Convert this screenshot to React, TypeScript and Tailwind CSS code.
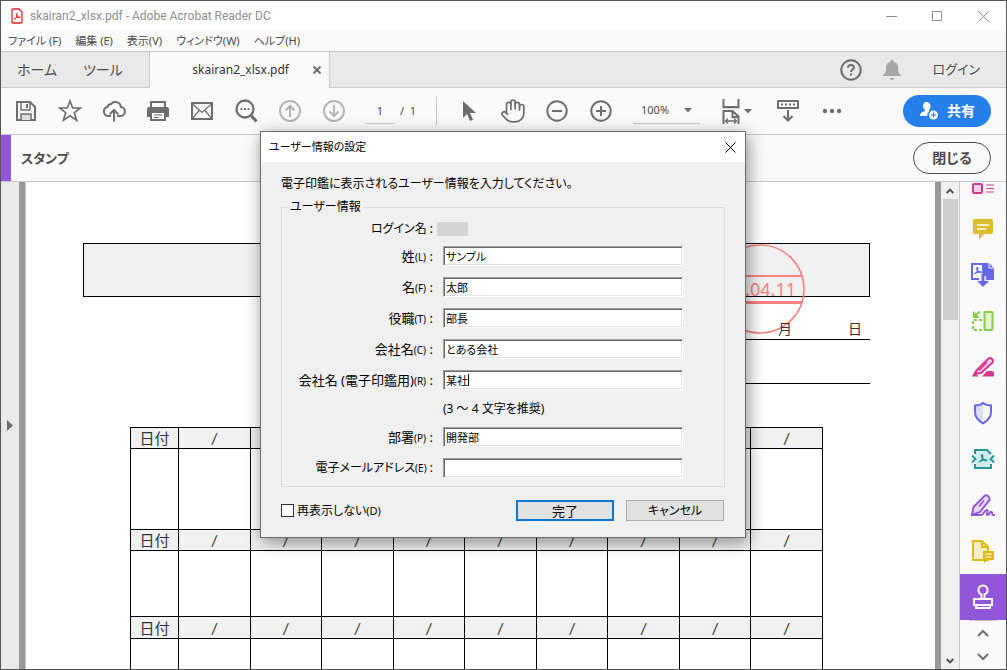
import React from 'react';
import { Hand } from 'lucide-react';

interface IconProps {
  w: number;
  h: number;
  className?: string;
  children: React.ReactNode;
}

const Icon: React.FC<IconProps> = ({ w, h, className, children }) => (
  <svg
    width={w}
    height={h}
    viewBox={`0 0 ${w} ${h}`}
    fill="none"
    stroke="currentColor"
    strokeWidth="2"
    className={`shrink-0 ${className || ''}`}
    aria-hidden="true"
  >
    {children}
  </svg>
);

// Main toolbar icons
const SaveIcon = () => (
  <Icon w={20} h={20}>
    <path d="M1 1h13l5 5v13H1z" />
    <path d="M5 1v8h9V1" strokeWidth="1.5" />
    <path d="M11 3v4" />
    <path d="M5 19v-6h10v6" fill="#dcdcdc" strokeWidth="1.5" />
  </Icon>
);

const StarIcon = () => (
  <Icon w={24} h={24}>
    <path d="M12 2l2.700 7h7.600l-6 4.700 2.300 7.600-6.600-4.500-6.600 4.500 2.300-7.600-6-4.700h7.600z" strokeWidth="1.700" />
  </Icon>
);

const CloudIcon = () => (
  <Icon w={24} h={24}>
    <path d="M9 17H6.500a4.500 4.500 0 0 1-1-8.900 3 3 0 0 1 3.300-2.800 5.500 5.500 0 0 1 10 2.700 4.500 4.500 0 0 1-.8 9H15" />
    <path d="M12 22.500V11.500M7.800 15.200L12 11l4.200 4.200" />
  </Icon>
);

const PrinterIcon = () => (
  <Icon w={22} h={22}>
    <path d="M4 7V2h14v5" />
    <path d="M0 9q0-2 2-2h18q2 0 2 2v8h-4v-4H4v4H0z" fill="currentColor" stroke="none" />
    <path d="M4 12h14v8H4z" fill="#fafafa" />
    <path d="M7 15h8M7 17.500h5" strokeWidth="1" />
  </Icon>
);

const MailIcon = () => (
  <Icon w={22} h={18}>
    <rect x="1" y="1" width="20" height="16" />
    <path d="M1 1.500l10 9 10-9M1.500 16.500l6.500-8M20.500 16.500l-6.500-8" strokeWidth="1.200" />
  </Icon>
);

const SearchIcon = () => (
  <Icon w={24} h={24}>
    <circle cx="11" cy="10" r="8.500" strokeWidth="2.300" />
    <path d="M17 16.500l5.500 6" strokeWidth="3" />
    <path d="M6.500 10h2M10 10h2M13.500 10h2" />
  </Icon>
);

const ArrowCircleIcon: React.FC<{ down?: boolean }> = ({ down }) => (
  <Icon w={22} h={22} className="text-[#b4b4b4]">
    <circle cx="11" cy="11" r="10" />
    <path d={down ? 'M11 5v11M6.500 11.500L11 16l4.500-4.500' : 'M11 17V6M6.500 10.500L11 6l4.500 4.500'} />
  </Icon>
);

const ZoomCircleIcon: React.FC<{ plus?: boolean }> = ({ plus }) => (
  <Icon w={22} h={22}>
    <circle cx="11" cy="11" r="9.700" />
    <path d={plus ? 'M6 11h10M11 6v10' : 'M6 11h10'} />
  </Icon>
);

const CursorIcon = () => (
  <Icon w={14} h={22}>
    <path d="M1 1v17l4-4 3 7 3-1.300L8 13h6z" fill="currentColor" stroke="none" />
  </Icon>
);

const FitIcon = () => (
  <Icon w={18} h={25}>
    <path d="M1.500 0v8h15V0" />
    <path d="M0 9.500h18" stroke="#d5d5d5" strokeWidth="1" />
    <path d="M1.500 25V12h9l6 5.500V25M10.500 12v6h6" />
    <path d="M3.500 22h11M6 19.500L3.500 22 6 24.500M12 19.500l2.500 2.500-2.500 2.500" strokeWidth="1.300" />
  </Icon>
);

const KeyboardIcon = () => (
  <Icon w={22} h={22}>
    <rect x="1" y="1" width="20" height="7" />
    <path d="M4 4.500h14" strokeDasharray="2 2" />
    <path d="M11 10v10M6.500 16L11 20.500l4.500-4.500" />
  </Icon>
);

const DotsIcon = () => (
  <Icon w={20} h={6}>
    <g fill="currentColor" stroke="none">
      <circle cx="3" cy="3" r="2.200" />
      <circle cx="10" cy="3" r="2.200" />
      <circle cx="17" cy="3" r="2.200" />
    </g>
  </Icon>
);

const ShareIcon = () => (
  <Icon w={20} h={18}>
    <g fill="currentColor" stroke="none">
      <path d="M7.500 0c2.600 0 4 1.800 4 4.300 0 1.700-.7 3-1.500 4v1.500c-1.500 1-2 2.700-1.600 4.200H1c0-3 1.800-4 5-5V8C5 7 4 5.800 4 4.300 4 1.800 5.200 0 7.500 0z" />
      <circle cx="14.500" cy="13" r="4.500" />
    </g>
    <path d="M12 13h5M14.500 10.500v5" stroke="#2680eb" strokeWidth="1.200" />
  </Icon>
);

const AcrobatMark = () => (
  <path d="M5 12.500c3-1 5-4.500 4.500-8 0-1-1.300-1-1.300 0 .3 3 2.500 5.500 5.300 6.200 1 .2 1-1 0-1-3.500-.3-6 .8-8.500 2.800" />
);

// Right-hand tool icons
const ExportListIcon = () => (
  <Icon w={24} h={12} className="text-[#d83790]">
    <rect x="2" y="1" width="9" height="9" rx="1" fill="#f7d3e5" />
    <path d="M15 2h8M15 5.500h8M15 9h8" strokeWidth="1.200" />
  </Icon>
);

const CommentIcon = () => (
  <Icon w={22} h={22} className="text-[#dfbd2b]">
    <path d="M2.500 1h17q1.500 0 1.500 1.500v12q0 1.500-1.500 1.500H12l-5 6v-6H2.500Q1 16 1 14.500v-12Q1 1 2.500 1z" fill="currentColor" stroke="none" />
    <path d="M5 7h12M5 11h9" stroke="#fff" strokeWidth="1.500" />
  </Icon>
);

const CreatePdfIcon = () => (
  <Icon w={26} h={26} className="text-[#6767ec]">
    <path d="M12.500 1H19l5 5v12h-8v-4h-3.500z" fill="currentColor" stroke="none" />
    <path d="M19 0v6h6" stroke="#fafafa" strokeWidth="1" />
    <path d="M9 17H2V2h11v9" />
    <g transform="translate(1 3) scale(.7)"><AcrobatMark /></g>
    <path d="M13 25l-6-6h12z" fill="currentColor" stroke="none" />
    <path d="M13 12v8" strokeWidth="3" />
  </Icon>
);

const OrganizeIcon = () => (
  <Icon w={24} h={22} className="text-[#84cf4a]">
    <rect x="13.500" y="2" width="8" height="18" rx="1" fill="#e2f4d3" />
    <path d="M11 10H2v10h9" strokeDasharray="3 2" />
    <path d="M2 1v7h7z" fill="currentColor" stroke="none" />
    <path d="M9 1.500L5 5" />
  </Icon>
);

const RedactIcon = () => (
  <Icon w={24} h={22} className="text-[#d83790]">
    <path d="M5 15l12-12q2-2 4 0t0 4L10 17l-5 .5z" fill="#f7d3e5" />
    <path d="M1 20.500l2.500-5 4 5zM11 20.500l5-5.500h5q2 0 2 2v3.500z" fill="currentColor" stroke="none" />
    <path d="M8 14.500l8-8" strokeWidth="1.500" />
  </Icon>
);

const ShieldIcon = () => (
  <Icon w={20} h={24} className="text-[#6767ec]">
    <path d="M10 2v20c-5-3-8-6-8-11V4.500C5 4.500 8 3.500 10 2z" fill="#dcdcfa" stroke="none" />
    <path d="M10 2c2 1.700 5 2.500 8 2.500V11c0 5-3 8.500-8 11.300C5 19.500 2 16 2 11V4.500C5 4.500 8 3.700 10 2z" />
  </Icon>
);

const CompressIcon = () => (
  <Icon w={24} h={22} className="text-[#1f9a9a]">
    <path d="M4 2h12l4 4v14H4z" fill="#d5ecec" stroke="none" />
    <path d="M4 6V2h12l4 4M4 16v4h16v-4" />
    <path d="M0 6h2l4 5-4 5H0zM24 6h-2l-4 5 4 5h2z" fill="#fafafa" stroke="none" />
    <path d="M1 7.500L4.500 11 1 14.500M23 7.500L19.500 11l3.500 3.500" />
    <g transform="translate(4 4) scale(.8)"><AcrobatMark /></g>
  </Icon>
);

const SignIcon = () => (
  <Icon w={26} h={24} className="text-[#9256d9]">
    <path d="M2 22l1.500-8L14.500 3q1.500-1.500 3.500 0t1.500 4L10 19z" fill="#e6d8f6" />
    <path d="M9 13.500l5-6" strokeWidth="1.500" />
    <path d="M2 22h9c3 0 4-6 6-5s-1.500 5 .5 5 2.500-4 4-3 0 3 1.500 3h2" />
  </Icon>
);

const PageCommentIcon = () => (
  <Icon w={24} h={24} className="text-[#dcbc0c]">
    <path d="M2 2h9l6 6v13H2z" fill="#f6eec6" />
    <path d="M11 2v6h6" />
    <path d="M12 12h11v9h-6l-4 3v-3h-1z" fill="currentColor" stroke="none" />
    <path d="M14.500 15.200h6M14.500 18h6" stroke="#fff" strokeWidth="1.200" />
  </Icon>
);

const StampIcon = () => (
  <Icon w={22} h={26} className="text-white">
    <path d="M9.500 15v-4.500a4.600 4.600 0 1 1 3 0V15" />
    <path d="M2 15h18v6H2zM4 21v3h14v-3" />
  </Icon>
);

const CloseX: React.FC<{ size: number; stroke?: string }> = ({ size, stroke = '1' }) => (
  <Icon w={size} h={size}>
    <path d={`M.5 .5L${size - 0.5} ${size - 0.5}M${size - 0.5} .5L.5 ${size - 0.5}`} strokeWidth={stroke} />
  </Icon>
);

const Triangle = () => (
  <Icon w={8} h={5} className="pointer-events-none">
    <path d="M0 0h8L4 4.500z" fill="currentColor" stroke="none" />
  </Icon>
);

const Chevron: React.FC<{ up?: boolean; small?: boolean }> = ({ up, small }) => (
  <svg
    width={small ? 8 : 12}
    height={small ? 6 : 8}
    viewBox="0 0 12 8"
    fill="none"
    stroke="currentColor"
    strokeWidth={small ? 3 : 2}
    aria-hidden="true"
  >
    <path d={up ? 'M1 7l5-5 5 5' : 'M1 1l5 5 5-5'} />
  </svg>
);

interface ToolButtonProps {
  label: string;
  className?: string;
  children: React.ReactNode;
}

const ToolButton: React.FC<ToolButtonProps> = ({ label, className, children }) => (
  <button aria-label={label} className={`flex h-full w-11 shrink-0 items-center justify-center ${className || ''}`}>
    {children}
  </button>
);

const menus = ['ファイル (F)', '編集 (E)', '表示(V)', 'ウィンドウ(W)', 'ヘルプ(H)'];

const TitleBar = () => (
  <header className="flex h-[30px] shrink-0 items-center bg-white pl-[10px] text-[#8e8e8e]">
    <Icon w={12} h={16} className="text-[#e5252a]">
      <path d="M2 1h6l3 3v10q0 1-1 1H2q-1 0-1-1V2q0-1 1-1z" strokeWidth="1.300" />
      <path d="M3 11.500c2-1 3.500-3 3-5.500 0-.6-.8-.6-.8 0 .3 2 1.500 3.500 3.500 3.800.8 0 .8-.8 0-.8-2 0-4 .8-5.700 2.500z" strokeWidth="1" />
    </Icon>
    <h1 className="ml-[7px] font-['Roboto',sans-serif] text-xs">skairan2_xlsx.pdf - Adobe Acrobat Reader DC</h1>
    <div className="ml-auto flex h-full items-center">
      <button aria-label="最小化" className="flex h-full w-[45px] items-center justify-center">
        <span className="h-px w-[11px] bg-[#8e8e8e]" />
      </button>
      <button aria-label="最大化" className="flex h-full w-[46px] items-center justify-center">
        <span className="size-[10px] border border-[#8e8e8e]" />
      </button>
      <button aria-label="閉じる" className="flex h-full w-[46px] items-center justify-center">
        <CloseX size={11} />
      </button>
    </div>
  </header>
);

const TabRow = () => (
  <div className="flex h-[37px] shrink-0 border-t border-[#c8c8c8] bg-[#e9e9e9] text-[#4b4b4b]">
    <nav className="flex w-[148px] shrink-0 items-center gap-[26px] border-b border-[#c8c8c8] pl-4 text-sm">
      <button>ホーム</button>
      <button>ツール</button>
    </nav>
    <div className="flex w-[181px] shrink-0 items-center justify-end border-x border-[#c8c8c8] bg-[#fafafa] pr-2 text-xs text-[#323232]">
      <span>skairan2_xlsx.pdf</span>
      <button aria-label="タブを閉じる" className="ml-6 text-[#6e6e6e]">
        <CloseX size={8} stroke="2" />
      </button>
    </div>
    <div className="flex flex-1 items-center justify-end border-b border-[#c8c8c8] pr-[26px]">
      <button aria-label="ヘルプ" className="text-[#6e6e6e]">
        <Icon w={22} h={22}>
          <circle cx="11" cy="11" r="9.700" />
          <path d="M8 8.700Q8 6 11 6t3 2.500c0 2-3 2-3 4.500M11 14.500v2" />
        </Icon>
      </button>
      <button aria-label="通知" className="ml-[21px] text-[#a6a6a6]">
        <Icon w={18} h={20}>
          <path d="M9 0c1.300 0 1.500.8 1.500 1.700C14 2.500 15 5 15 8c0 4 .5 5.500 3 7v1H0v-1c2.500-1.500 3-3 3-7 0-3 1-5.500 4.500-6.300C7.500.8 7.700 0 9 0zM6.500 18h5q-1 2-2.500 2t-2.500-2z" fill="currentColor" stroke="none" />
        </Icon>
      </button>
      <button className="ml-8 text-[13px]">ログイン</button>
    </div>
  </div>
);

const Toolbar = () => (
  <div className="flex h-[46px] shrink-0 items-center bg-[#fafafa] pl-[3px] pr-[15px] text-[#6e6e6e]">
    <ToolButton label="保存"><SaveIcon /></ToolButton>
    <ToolButton label="お気に入り"><StarIcon /></ToolButton>
    <ToolButton label="アップロード"><CloudIcon /></ToolButton>
    <ToolButton label="印刷"><PrinterIcon /></ToolButton>
    <ToolButton label="メール"><MailIcon /></ToolButton>
    <ToolButton label="検索"><SearchIcon /></ToolButton>
    <ToolButton label="前のページ"><ArrowCircleIcon /></ToolButton>
    <ToolButton label="次のページ"><ArrowCircleIcon down /></ToolButton>
    <input
      aria-label="ページ番号"
      defaultValue="1"
      className="ml-[10px] h-[26px] w-7 shrink-0 border-b border-[#c8c8c8] text-center text-[11px] text-[#4b4b4b]"
    />
    <span className="ml-[6px] w-9 shrink-0 whitespace-pre text-[11px] text-[#4b4b4b]">/  1</span>
    <span className="mr-[10px] h-7 w-px shrink-0 bg-[#c8c8c8]" />
    <ToolButton label="選択ツール"><CursorIcon /></ToolButton>
    <ToolButton label="手のひらツール"><Hand size={26} strokeWidth={1.6} /></ToolButton>
    <ToolButton label="縮小"><ZoomCircleIcon /></ToolButton>
    <ToolButton label="拡大"><ZoomCircleIcon plus /></ToolButton>
    <div className="relative ml-[10px] flex h-[26px] w-[67px] shrink-0 items-center border-b border-[#c8c8c8]">
      <select aria-label="表示倍率" className="w-full appearance-none pl-2 text-[11px] text-[#4b4b4b]">
        <option>100%</option>
      </select>
      <span className="pointer-events-none absolute right-2"><Triangle /></span>
    </div>
    <button aria-label="幅に合わせる" className="ml-[22px] flex items-center gap-1">
      <FitIcon />
      <Triangle />
    </button>
    <ToolButton label="注釈バー" className="ml-[14px]"><KeyboardIcon /></ToolButton>
    <ToolButton label="その他"><DotsIcon /></ToolButton>
    <button className="ml-auto flex h-8 w-[88px] shrink-0 items-center justify-center gap-2 rounded-full bg-[#2680eb] text-sm font-bold text-white">
      <ShareIcon />
      共有
    </button>
  </div>
);

// Each band is one dated header row and the empty row for stamps below it
const bands = [
  { head: 'h-[21px]', body: 'h-[81px]' },
  { head: 'h-[21px]', body: 'h-[66px]' },
  { head: 'h-[22px]', body: 'h-[81px]' },
];
const days = Array.from({ length: 9 }, (_, i) => i);

const DocumentPage = () => (
  <div className="flex-1 overflow-hidden border-l border-[#c8c8c8] bg-white pl-[57px] pr-[65px] pt-[61px] text-[#333]">
    <div className="relative h-[54px] border border-black bg-[#f1f1f1]">
      <svg
        className="absolute right-16 top-0"
        width="90"
        height="92"
        viewBox="0 0 90 92"
        fill="none"
        stroke="#fa7f7f"
        strokeWidth="1.5"
      >
        <circle cx="45" cy="45" r="44" />
        <path d="M3 32h84" strokeWidth="2" />
        <path d="M3 58.500h84" strokeWidth="3" />
        <text x="81" y="52" textAnchor="end" fontSize="18" fill="#fa7f7f" stroke="none">20.04.11</text>
      </svg>
    </div>
    <div className="relative ml-auto flex h-[43px] w-1/2 items-end justify-end gap-14 border-b border-black pr-2 text-sm">
      <span>月</span>
      <span>日</span>
    </div>
    <div className="ml-auto h-11 w-1/2 border-b border-black" />
    <div className="mr-[47px] mt-[43px] pl-[47px]">
      <table className="w-full table-fixed border-collapse text-center text-[15px] leading-[18px]">
        <colgroup>
          <col className="w-12" />
        </colgroup>
        <tbody>
          {bands.map((band, i) => (
            <React.Fragment key={i}>
              <tr className={`bg-[#f1f1f1] ${band.head}`}>
                <th className="border border-black p-0 font-normal">日付</th>
                {days.map((d) => (
                  <td key={d} className="border border-black p-0 font-['Lato',sans-serif] text-base leading-[18px]">/</td>
                ))}
              </tr>
              <tr className={band.body}>
                <td className="border border-black p-0" />
                {days.map((d) => (
                  <td key={d} className="border border-black p-0" />
                ))}
              </tr>
            </React.Fragment>
          ))}
        </tbody>
      </table>
    </div>
  </div>
);

const tools = [
  { label: 'コメント', icon: <CommentIcon /> },
  { label: 'PDF を作成', icon: <CreatePdfIcon /> },
  { label: 'ページを整理', icon: <OrganizeIcon /> },
  { label: '墨消し', icon: <RedactIcon /> },
  { label: '保護', icon: <ShieldIcon /> },
  { label: 'PDF を圧縮', icon: <CompressIcon /> },
  { label: '入力と署名', icon: <SignIcon /> },
  { label: 'レビュー用に送信', icon: <PageCommentIcon /> },
  { label: 'スタンプ', icon: <StampIcon />, active: true },
];

const ToolPane = () => (
  <aside className="flex w-[47px] shrink-0 flex-col border-l border-[#c8c8c8] bg-[#fafafa]">
    <button aria-label="書き出し" className="flex h-6 justify-center pt-px">
      <ExportListIcon />
    </button>
    {tools.map((tool) => (
      <button
        key={tool.label}
        aria-label={tool.label}
        className={`flex h-[46px] shrink-0 items-center justify-center ${tool.active ? 'bg-[#9256d9]' : ''}`}
      >
        {tool.icon}
      </button>
    ))}
    <div className="mx-[9px] flex flex-1 flex-col items-center justify-around border-t border-[#c8c8c8] text-[#6e6e6e]">
      <button aria-label="上へ"><Chevron up /></button>
      <button aria-label="下へ"><Chevron /></button>
    </div>
  </aside>
);

interface Field {
  id: string;
  label: string;
  accessKey: string;
  value: string;
  size?: string;
  caret?: boolean;
  hint?: string;
}

const fields: Field[] = [
  { id: 'last', label: '姓', accessKey: '(L)', value: 'サンプル' },
  { id: 'first', label: '名', accessKey: '(F)', value: '太郎' },
  { id: 'title', label: '役職', accessKey: '(T)', value: '部長' },
  { id: 'company', label: '会社名', accessKey: '(C)', value: 'とある会社' },
  { id: 'short', label: '会社名 (電子印鑑用)', accessKey: '(R)', value: '某社', caret: true, hint: '(3 ～ 4 文字を推奨)' },
  { id: 'dept', label: '部署', accessKey: '(P)', value: '開発部' },
  { id: 'mail', label: '電子メールアドレス', accessKey: '(E)', value: '', size: 'text-xs' },
];

const UserInfoDialog = () => (
  <div
    role="dialog"
    aria-labelledby="dialog-title"
    className="absolute left-[259px] top-[130px] w-[486px] border border-[#6b6b6b] bg-[#f0f0f0] text-xs leading-5 text-black shadow-[2px_4px_16px_rgba(0,0,0,0.45)]"
  >
    <div className="flex h-[30px] items-center justify-between bg-white pl-2 pr-[9px]">
      <h2 id="dialog-title" className="text-[11px]">ユーザー情報の設定</h2>
      <button aria-label="閉じる"><CloseX size={11} /></button>
    </div>
    <form className="px-5 pb-4 pt-3" onSubmit={(e) => e.preventDefault()}>
      <p>電子印鑑に表示されるユーザー情報を入力してください。</p>
      <fieldset className="mt-[3px] border border-[#dcdcdc] pb-2 pl-2 pr-[41px]">
        <legend className="-ml-[2px] px-[2px]">ユーザー情報</legend>
        <div className="flex h-6 items-center">
          <span className="flex-1 pr-1 text-right">ログイン名 :</span>
          <span className="mr-[215px] h-[14px] w-[31px] bg-[#d4d4d4]" />
        </div>
        <div className="mt-[5px] flex flex-col gap-[11px]">
          {fields.map((f) => (
            <React.Fragment key={f.id}>
              <div className="flex h-5 items-center">
                <label htmlFor={f.id} className={`flex-1 whitespace-nowrap pr-[10px] text-right ${f.size || 'text-[13px]'}`}>
                  {f.label}<span className="text-[10px]">{f.accessKey}</span> :
                </label>
                <div className="relative h-5 w-[240px] shrink-0">
                  <input
                    id={f.id}
                    defaultValue={f.value}
                    className="block size-full border border-b-white border-l-[#a0a0a0] border-r-white border-t-[#a0a0a0] bg-white pl-[2px] text-[11px] shadow-[inset_1px_1px_0_#696969,inset_-1px_-1px_0_#e3e3e3] outline-none"
                  />
                  {f.caret && <span className="absolute left-[25px] top-1 h-3 w-px bg-black" />}
                </div>
              </div>
              {f.hint && <p className="flex h-[15px] w-[240px] items-center self-end">{f.hint}</p>}
            </React.Fragment>
          ))}
        </div>
      </fieldset>
      <div className="mr-px mt-[13px] flex items-center">
        <label className="flex items-center gap-[3px]">
          <input type="checkbox" className="size-[13px] appearance-none border border-[#333] bg-white" />
          <span>再表示しない<span className="text-[11px]">(D)</span></span>
        </label>
        <button type="submit" className="ml-auto h-[21px] w-[98px] border-2 border-[#0078d7] bg-[#e1e1e1] text-[13px] leading-4">完了</button>
        <button type="button" className="ml-3 h-[21px] w-[98px] border border-[#adadad] bg-[#e1e1e1] leading-4">キャンセル</button>
      </div>
    </form>
  </div>
);

const App: React.FC = () => (
  <div className="relative flex h-screen flex-col overflow-hidden border border-[#555] bg-[#fafafa] font-['Noto_Sans','Noto_Sans_CJK_JP',sans-serif] [font-feature-settings:'palt']">
    <TitleBar />
    <nav className="flex h-5 shrink-0 items-center gap-[14px] bg-[#fafafa] pl-[7px] text-[11px] text-[#4b4b4b]">
      {menus.map((m) => (
        <button key={m}>{m}</button>
      ))}
    </nav>
    <TabRow />
    <Toolbar />
    <div className="flex h-12 shrink-0 items-center border-y border-[#c8c8c8] bg-[#fafafa] pr-[15px] text-sm font-bold text-[#4b4b4b]">
      <span className="h-full w-[10px] bg-[#9256d9]" />
      <h2 className="ml-[10px] text-[13px]">スタンプ</h2>
      <button className="ml-auto h-8 w-[78px] rounded-full border border-[#4b4b4b]">閉じる</button>
    </div>
    <main className="flex min-h-0 flex-1">
      <button aria-label="パネルを開く" className="flex w-[18px] shrink-0 items-center justify-center bg-[#e9e9e9] text-[#6e6e6e]">
        <Icon w={6} h={11}>
          <path d="M0 0v11l6-5.500z" fill="currentColor" stroke="none" />
        </Icon>
      </button>
      <div className="flex min-w-0 flex-1 border-x-[6px] border-[#999]">
        <DocumentPage />
      </div>
      <div className="flex w-[18px] shrink-0 flex-col items-center bg-[#f0f0f0] text-[#505050]">
        <button aria-label="上にスクロール" className="flex h-[17px] items-center"><Chevron up small /></button>
        <div className="h-[121px] w-[15px] bg-[#cdcdcd]" />
        <button aria-label="下にスクロール" className="mt-auto flex h-[17px] items-center"><Chevron small /></button>
      </div>
      <ToolPane />
    </main>
    <UserInfoDialog />
  </div>
);

export default App;
